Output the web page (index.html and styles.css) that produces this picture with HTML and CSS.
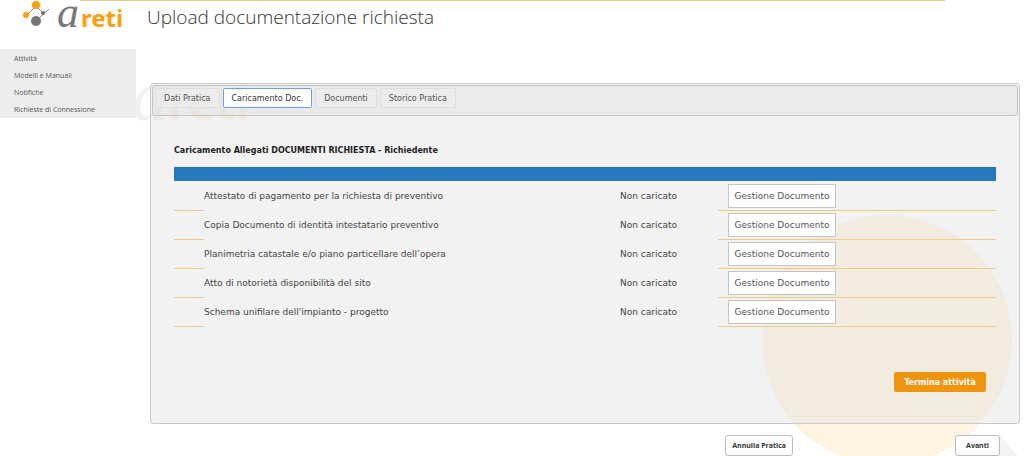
FILE: index.html
```html
<!DOCTYPE html>
<html lang="it">
<head>
<meta charset="utf-8">
<title>Upload documentazione richiesta</title>
<link rel="stylesheet" href="styles.css">
</head>
<body>
<div class="backdrop" aria-hidden="true">
  <div class="mark"><span class="mark-a">a</span><span class="mark-rest">reti</span></div>
  <svg class="disc" width="262" height="251" viewBox="0 0 262 251">
    <circle cx="125" cy="125" r="125" fill="#fff3e2"/>
    <path d="M230 220H238L256 241V251H232Z" fill="#f3f3f3"/>
  </svg>
</div>
<div class="topline"></div>
<header class="header">
  <div class="logo">
    <svg class="logo-icon" width="28" height="26" viewBox="0 0 28 26" aria-hidden="true">
      <path d="M4 14L13 5L21 13M26 8L13 20" fill="none" stroke="#858585" stroke-width="1"/>
      <circle cx="13" cy="4" r="4" fill="#ff9d0a"/>
      <circle cx="3" cy="14" r="3" fill="#ff9d0a"/>
      <circle cx="20" cy="12" r="2" fill="#6e6e6e"/>
      <circle cx="13" cy="20" r="5" fill="#777"/>
    </svg>
    <span class="logo-a">a</span><span class="logo-rest">reti</span>
  </div>
  <h1 class="title">Upload documentazione richiesta</h1>
</header>
<div class="layout">
  <nav class="side">
    <a href="#">Attività</a>
    <a href="#">Modelli e Manuali</a>
    <a href="#">Notifiche</a>
    <a href="#">Richieste di Connessione</a>
  </nav>
  <main class="main">
    <section class="panel">
      <div class="tabs" role="tablist">
        <button class="tab" role="tab">Dati Pratica</button>
        <button class="tab tab-active" role="tab" aria-selected="true">Caricamento Doc.</button>
        <button class="tab" role="tab">Documenti</button>
        <button class="tab" role="tab">Storico Pratica</button>
      </div>
      <div class="content">
        <h2 class="heading">Caricamento Allegati DOCUMENTI RICHIESTA - Richiedente</h2>
        <div class="bar"></div>
        <table class="docs">
          <tr><td class="mini"></td><td class="name">Attestato di pagamento per la richiesta di preventivo</td><td class="state">Non caricato</td><td class="action"><button class="manage">Gestione Documento</button></td></tr>
          <tr><td class="mini"></td><td class="name">Copia Documento di identità intestatario preventivo</td><td class="state">Non caricato</td><td class="action"><button class="manage">Gestione Documento</button></td></tr>
          <tr><td class="mini"></td><td class="name">Planimetria catastale e/o piano particellare dell’opera</td><td class="state">Non caricato</td><td class="action"><button class="manage">Gestione Documento</button></td></tr>
          <tr><td class="mini"></td><td class="name">Atto di notorietà disponibilità del sito</td><td class="state">Non caricato</td><td class="action"><button class="manage">Gestione Documento</button></td></tr>
          <tr><td class="mini"></td><td class="name">Schema unifilare dell'impianto - progetto</td><td class="state">Non caricato</td><td class="action"><button class="manage">Gestione Documento</button></td></tr>
        </table>
        <div class="finish"><button class="primary">Termina attività</button></div>
      </div>
    </section>
    <footer class="footer">
      <button class="plain">Annulla Pratica</button>
      <button class="plain">Avanti</button>
    </footer>
  </main>
</div>
</body>
</html>
```
FILE: styles.css
```css
* { box-sizing: border-box; }
body { margin: 0; background: #fff; font-family: "DejaVu Sans", sans-serif; font-size: 9px; color: #444; overflow: hidden; }
button { font: inherit; color: inherit; margin: 0; white-space: nowrap; }
.backdrop { position: absolute; inset: 0; z-index: -1; overflow: hidden; }
.mark { position: absolute; left: 132px; top: 64px; display: flex; align-items: baseline; line-height: 64px; }
.mark-a { font: italic 72px/64px "Liberation Serif", serif; color: #f1f1f1; }
.mark-rest { font: bold 46px/64px "Open Sans", sans-serif; color: #fff2e0; }
.disc { position: absolute; right: 0; top: 215px; }
.topline { height: 1px; margin: 0 79px 0 80px; background: #eac989; }
.header { display: flex; height: 48px; padding-left: 23px; }
.logo { display: flex; width: 124px; height: 28px; align-items: baseline; }
.logo-icon { align-self: flex-start; margin-right: 6px; }
.logo-a { width: 24px; font: italic 44px/24px "Liberation Serif", serif; color: #777; }
.logo-rest { font: bold 24px/24px "Noto Sans", sans-serif; color: #ff9d0a; }
.title { margin: 2px 0 0; font: 300 19px/28px "Open Sans", sans-serif; color: #333; }
.layout { display: flex; align-items: flex-start; }
.side { width: 136px; flex: none; padding: 1px 14px 0; background: #ededed; }
.side a { display: block; font: 7px/17px "Open Sans", sans-serif; color: #555; text-decoration: none; }
.main { flex: 1; padding: 34px 4px 0 14px; }
.panel { padding: 1px; border: 1px solid #c9c9c9; border-radius: 3px; background: rgba(222, 222, 222, .4); }
.tabs { display: flex; gap: 3px; height: 31px; padding: 2px; border: 1px solid #c2c2c2; border-radius: 3px; background: rgba(216, 214, 214, .3); }
.tab { height: 20px; padding: 0 8px; border: 1px solid #dedede; border-radius: 2px; background: #ececec99; font-size: 8px; color: #555; }
.tab-active { border-color: #6f9ee8; background: #fff; color: #333; }
.content { padding: 29px 22px 30px; }
.heading { margin: 0 0 10px; font-size: 8px; line-height: 12px; color: #222; }
.bar { height: 14px; margin-bottom: 1px; background: #2678be; }
.docs { width: 100%; border-collapse: separate; border-spacing: 0; table-layout: fixed; }
.docs td { height: 29px; padding: 0; }
.docs .mini { width: 30px; border-bottom: 1px solid #f0c987; }
.docs .state { width: 98px; }
.docs .name, .docs .state { padding-bottom: 1px; }
.docs .action { width: 278px; padding-left: 10px; border-bottom: 1px solid #f0c987; }
.manage { display: block; width: 108px; height: 24px; padding: 0; border: 1px solid #c4c4c4; background: #fff; color: #555; }
.finish { display: flex; justify-content: flex-end; padding: 45px 10px 0; }
.primary { width: 92px; height: 20px; padding: 0; border: 0; border-radius: 2px; background: #f0930f; color: #fff; font-size: 8px; font-weight: bold; }
.footer { display: flex; justify-content: flex-end; gap: 162px; padding: 11px 20px 0; }
.plain { height: 21px; min-width: 45px; padding: 0 6px; border: 1px solid #bbb; border-radius: 3px; background: #fff; font: bold 7px/18px "Open Sans", sans-serif; color: #333; }
```
